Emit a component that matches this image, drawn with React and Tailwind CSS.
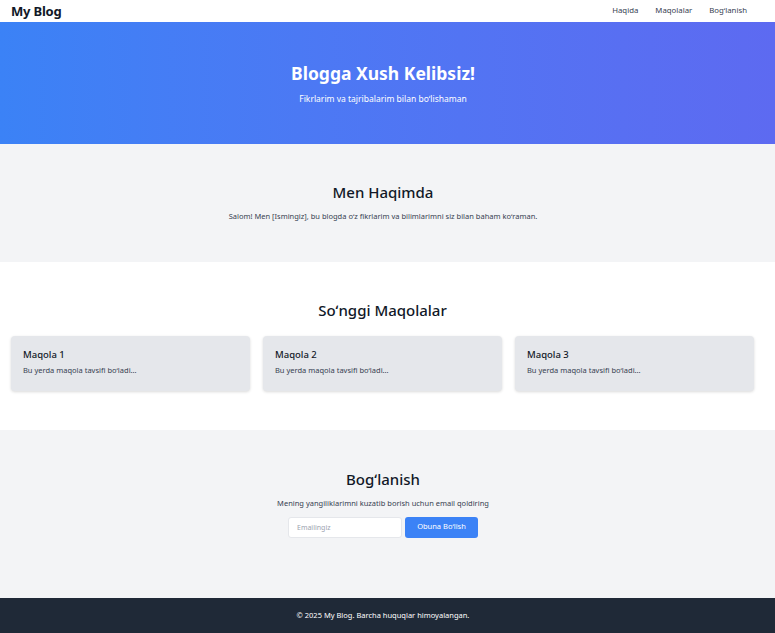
export default function App() {
  return (
    <div className="min-h-[633px] bg-white text-[#111827] font-['Noto_Sans',sans-serif]">
      <nav className="h-[22px] bg-white flex items-center justify-between pl-[11px] pr-[28px]">
        <div className="text-[13px] font-bold leading-none tracking-[-0.2px]">My Blog</div>
        <div className="flex gap-[17px] text-[7.8px] text-[#374151]">
          <span>Haqida</span>
          <span>Maqolalar</span>
          <span>Bogʻlanish</span>
        </div>
      </nav>
      <section className="h-[122px] pr-[9px] bg-gradient-to-r from-[#3b82f6] to-[#5d6af1] flex flex-col items-center justify-center text-white">
        <h1 className="text-[17.5px] font-bold leading-none mt-[2px]">Blogga Xush Kelibsiz!</h1>
        <p className="text-[8.5px] mt-[13px] leading-none">Fikrlarim va tajribalarim bilan boʻlishaman</p>
      </section>
      <section className="h-[118px] pr-[9px] bg-[#f3f4f6] flex flex-col items-center justify-center">
        <h2 className="text-[15px] font-medium leading-none mt-[-1px]">Men Haqimda</h2>
        <p className="text-[7.5px] text-[#374151] mt-[13px] leading-none">Salom! Men [Ismingiz], bu blogda oʻz fikrlarim va bilimlarimni siz bilan baham koʻraman.</p>
      </section>
      <section className="h-[168px] bg-white pl-[11px] pr-[21px] pt-[41px]">
        <h2 className="text-[15px] font-medium leading-none text-center">Soʻnggi Maqolalar</h2>
        <div className="grid grid-cols-3 gap-[13px] mt-[18px]">
          {[1, 2, 3].map((n) => (
            <div key={n} className="h-[55px] bg-[#e5e7eb] rounded-[4px] shadow-[0_1px_3px_rgba(0,0,0,0.15)] px-[12px] pt-[14px]">
              <h3 className="text-[9.5px] font-medium leading-none">Maqola {n}</h3>
              <p className="text-[7.5px] text-[#374151] mt-[7px] leading-none">Bu yerda maqola tavsifi boʻladi...</p>
            </div>
          ))}
        </div>
      </section>
      <section className="h-[168px] pr-[9px] bg-[#f3f4f6] flex flex-col items-center pt-[42px]">
        <h2 className="text-[15px] font-medium leading-none">Bogʻlanish</h2>
        <p className="text-[7.5px] text-[#374151] mt-[13px] leading-none">Mening yangiliklarimni kuzatib borish uchun email qoldiring</p>
        <div className="flex gap-[3px] mt-[9px]">
          <input
            placeholder="Emailingiz"
            className="w-[114px] h-[21px] bg-white border border-[#e5e7eb] rounded-[3px] px-[8px] text-[7px] placeholder:text-[#9ca3af] outline-none"
          />
          <button className="w-[73px] h-[21px] bg-[#3b82f6] text-white text-[7.5px] rounded-[3px]">Obuna Boʻlish</button>
        </div>
      </section>
      <footer className="h-[35px] pr-[9px] bg-[#1f2937] text-white flex items-center justify-center text-[7.5px]">
        © 2025 My Blog. Barcha huquqlar himoyalangan.
      </footer>
    </div>
  );
}
